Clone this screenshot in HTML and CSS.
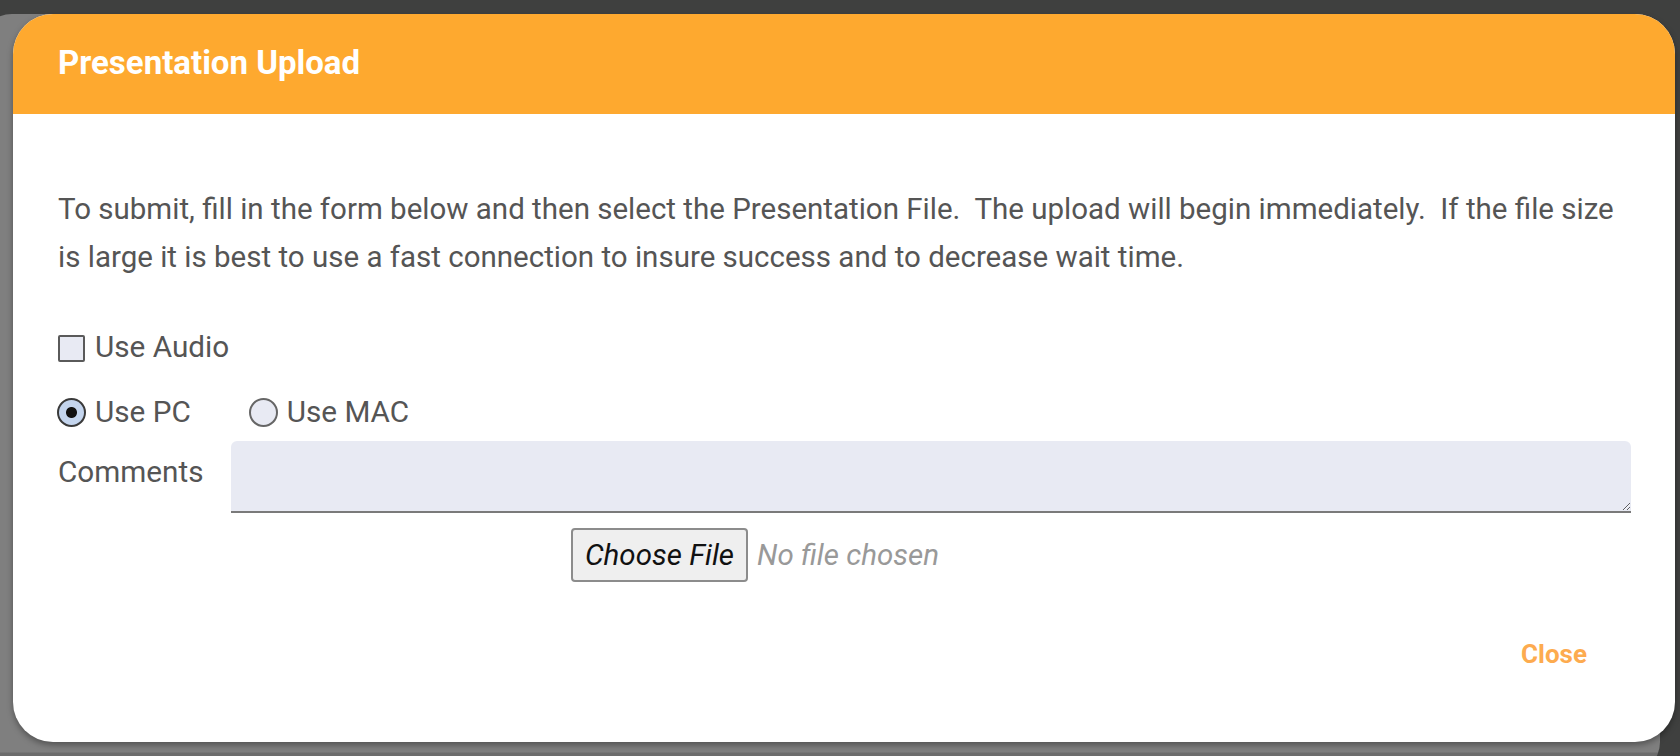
FILE: index.html
```html
<!DOCTYPE html>
<html lang="en">
<head>
<meta charset="utf-8">
<title>Presentation Upload</title>
<link rel="stylesheet" href="styles.css">
</head>
<body>
<div class="backdrop"></div>
<div class="modal">
  <div class="modal-header">
    <h1 class="modal-title">Presentation Upload</h1>
  </div>
  <div class="modal-body">
    <p class="intro">To submit, fill in the form below and then select the Presentation File.&nbsp; The upload will begin immediately.&nbsp; If the file size is large it is best to use a fast connection to insure success and to decrease wait time.</p>
    <label class="option-row">
      <input type="checkbox" class="check">
      <span>Use Audio</span>
    </label>
    <div class="option-row radios">
      <label class="radio-option">
        <input type="radio" name="platform" class="radio" checked>
        <span>Use PC</span>
      </label>
      <label class="radio-option">
        <input type="radio" name="platform" class="radio">
        <span>Use MAC</span>
      </label>
    </div>
    <div class="comments-row">
      <label class="comments-label" for="comments">Comments</label>
      <textarea id="comments" class="comments"></textarea>
    </div>
    <div class="file-row">
      <button type="button" class="file-btn">Choose File</button>
      <span class="file-name">No file chosen</span>
    </div>
  </div>
  <div class="modal-footer">
    <button type="button" class="close-btn">Close</button>
  </div>
</div>
</body>
</html>
```
FILE: styles.css
```css
* { box-sizing: border-box; }
html, body {
  margin: 0;
  height: 756px;
  overflow: hidden;
}
body {
  background: #3f403f;
  font-family: Roboto, "Liberation Sans", sans-serif;
  padding: 14px 0 0 13px;
  position: relative;
}
.backdrop {
  position: absolute;
  left: -20px;
  top: 14px;
  width: 1680px;
  height: 760px;
  border-radius: 32px;
  background: linear-gradient(to bottom, #7f7f7f 0, #7f7f7f 738px, #6c6c6c 739px, #6c6c6c 100%);
}
.modal {
  position: relative;
  width: 1662px;
  height: 728px;
  background: #fff;
  border-radius: 40px;
  overflow: hidden;
  display: flex;
  flex-direction: column;
  box-shadow: 0 3px 6px rgba(0,0,0,0.35);
}
.modal-header {
  height: 100px;
  background: #fea92f;
  padding: 1px 45px 0;
  flex: none;
}
.modal-title {
  margin: 0;
  font-size: 33px;
  font-weight: 700;
  line-height: 95px;
  color: #fff;
}
.modal-body {
  padding: 71px 44px 0 45px;
  color: #555;
}
.intro {
  margin: 0 0 46px;
  font-size: 29.5px;
  line-height: 48px;
}
.option-row {
  display: flex;
  align-items: center;
  font-size: 29.7px;
  line-height: 40px;
  gap: 10px;
}
.radios {
  margin-top: 25px;
  gap: 59px;
}
.radio-option {
  display: flex;
  align-items: center;
  gap: 9px;
}
.check {
  appearance: none;
  margin: 3px 0 0 0;
  width: 27px;
  height: 27px;
  border: 2px solid #5a5a5a;
  border-radius: 2px;
  background: #e8eaf3;
}
.radio {
  appearance: none;
  margin: 0 0 0 -1px;
  width: 29px;
  height: 29px;
  border: 2px solid #666;
  border-radius: 50%;
  background: #e8eaf3;
}
.radio:checked {
  border-color: #3a3a3a;
  background: radial-gradient(circle, #111 0, #111 5px, #c4d5ee 6px, #c4d5ee 100%);
}
.comments-row {
  display: flex;
  align-items: flex-start;
  margin-top: 9px;
}
.comments-label {
  width: 173px;
  flex: none;
  font-size: 29.7px;
  line-height: 40px;
  margin-top: 11px;
}
.comments {
  flex: 1;
  height: 72px;
  background: #e8eaf3;
  border: none;
  border-bottom: 2px solid #7a7a7a;
  border-radius: 6px 6px 0 0;
  font-family: inherit;
  font-size: 20px;
  padding: 8px;
  outline: none;
}
.file-row {
  display: flex;
  align-items: center;
  gap: 9px;
  margin: 15px 0 0 513px;
}
.file-btn {
  width: 177px;
  height: 54px;
  border: 2px solid #8c8c8c;
  border-radius: 4px;
  background: #efefef;
  font-family: inherit;
  font-size: 29.5px;
  font-style: italic;
  color: #111;
  padding: 0;
}
.file-name {
  font-size: 29.5px;
  font-style: italic;
  color: #999;
}
.modal-footer {
  display: flex;
  justify-content: flex-end;
  padding: 52px 88px 0 0;
}
.close-btn {
  background: none;
  border: none;
  padding: 0;
  font-family: inherit;
  font-size: 26px;
  font-weight: 700;
  line-height: 40px;
  color: #fdab4f;
}
```
